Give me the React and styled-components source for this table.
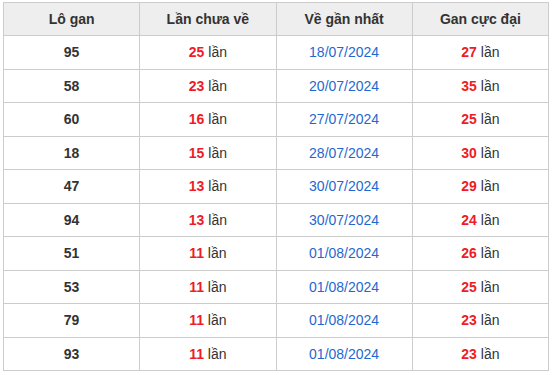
import React from "react";
import styled, { createGlobalStyle } from "styled-components";

const Global = createGlobalStyle`
  html, body { margin: 0; padding: 0; background: #fff; }
  body { font-family: "Liberation Sans", Arial, sans-serif; }
`;

const Wrap = styled.div`
  padding: 2px 4px 0 3px;
`;

const Table = styled.table`
  width: 546px;
  border-collapse: collapse;
  table-layout: fixed;
  font-size: 14px;
  color: #333;
`;

const Th = styled.th`
  background: #eeeeee;
  border: 1px solid #cccccc;
  height: 32px;
  padding: 0;
  font-weight: bold;
  text-align: center;
  color: #333;
`;

const Td = styled.td`
  border: 1px solid #cccccc;
  height: 32.5px;
  padding: 0;
  text-align: center;
  font-weight: ${(p) => (p.$bold ? "bold" : "normal")};
  color: ${(p) => (p.$blue ? "#1f68d0" : "#333")};
`;

const Red = styled.b`
  color: #ee1c25;
  font-weight: bold;
`;

const rows = [
  ["95", "25", "18/07/2024", "27"],
  ["58", "23", "20/07/2024", "35"],
  ["60", "16", "27/07/2024", "25"],
  ["18", "15", "28/07/2024", "30"],
  ["47", "13", "30/07/2024", "29"],
  ["94", "13", "30/07/2024", "24"],
  ["51", "11", "01/08/2024", "26"],
  ["53", "11", "01/08/2024", "25"],
  ["79", "11", "01/08/2024", "23"],
  ["93", "11", "01/08/2024", "23"],
];

export default function App() {
  return (
    <Wrap>
      <Global />
      <Table>
        <thead>
          <tr>
            <Th>Lô gan</Th>
            <Th>Lần chưa về</Th>
            <Th>Về gần nhất</Th>
            <Th>Gan cực đại</Th>
          </tr>
        </thead>
        <tbody>
          {rows.map((r, i) => (
            <tr key={i}>
              <Td $bold>{r[0]}</Td>
              <Td>
                <Red>{r[1]}</Red> lần
              </Td>
              <Td $blue>{r[2]}</Td>
              <Td>
                <Red>{r[3]}</Red> lần
              </Td>
            </tr>
          ))}
        </tbody>
      </Table>
    </Wrap>
  );
}
